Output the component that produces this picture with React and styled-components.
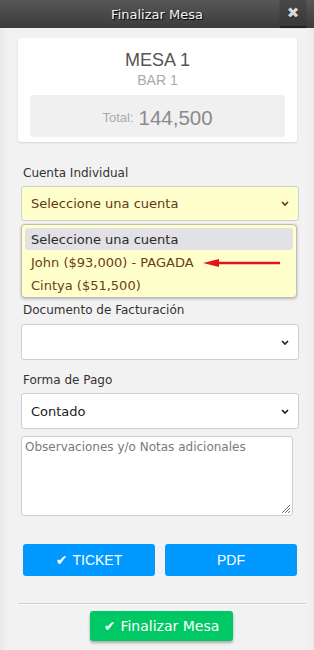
import React from "react";
import styled, { createGlobalStyle } from "styled-components";

const Global = createGlobalStyle`
  html, body { margin: 0; padding: 0; }
  body { width: 314px; height: 650px; overflow: hidden; background: #f1f1f1; font-family: "DejaVu Sans", Verdana, sans-serif; }
  * { box-sizing: border-box; }
`;

const Modal = styled.div`
  width: 314px;
  height: 650px;
  display: flex;
  flex-direction: column;
  background: linear-gradient(to right, #e9e9e9 0px, #f2f2f2 8px, #f2f2f2 306px, #ececec 314px);
`;

const Header = styled.div`
  height: 28px;
  flex: none;
  display: flex;
  align-items: center;
  justify-content: center;
  position: relative;
  background: linear-gradient(#575757, #3b3b3b);
  color: #f4f4f4;
  font-size: 13px;
  text-shadow: 1px 1px 1px #000;
`;

const Close = styled.div`
  position: absolute;
  right: 8px;
  top: 0;
  width: 26px;
  height: 27px;
  background: linear-gradient(#484848, #393939);
  border-bottom: 1px solid #222;
  box-shadow: 0 1px 1px rgba(0,0,0,0.4);
  display: flex;
  align-items: center;
  justify-content: center;
  color: #d8d8d8;
  font-size: 15px;
  text-shadow: 0 1px 0 #222;
`;

const Body = styled.div`
  display: flex;
  flex-direction: column;
  padding: 10px 16px 0 18px;
`;

const Card = styled.div`
  background: #fff;
  border-radius: 3px;
  box-shadow: 0 1px 2px rgba(0,0,0,0.12);
  width: 279px;
  padding: 12px 12px 5px;
  display: flex;
  flex-direction: column;
  align-items: center;
  font-family: "Liberation Sans", Arial, sans-serif;
`;

const Mesa = styled.div`
  font-size: 18px;
  line-height: 21px;
  color: #555;
`;

const Bar = styled.div`
  font-size: 14px;
  line-height: 16px;
  color: #aaa;
  margin-top: 1px;
  margin-bottom: 7px;
`;

const TotalBox = styled.div`
  width: 100%;
  height: 42px;
  background: #f0f0f0;
  border-radius: 3px;
  display: flex;
  align-items: center;
  justify-content: center;
  gap: 5px;
  color: #aaa;
  font-size: 13px;
  padding-top: 3px;
`;

const Amount = styled.span`
  font-size: 20.5px;
  color: #8a8a8a;
`;

const Form = styled.div`
  display: flex;
  flex-direction: column;
  padding-left: 3px;
  margin-right: -1px;
`;

const Label = styled.div`
  font-size: 12px;
  line-height: 15px;
  color: #333;
  margin-top: ${p => p.$top}px;
  margin-bottom: ${p => p.$bottom || 5}px;
  padding-left: 2px;
`;

const Select = styled.div`
  height: ${p => p.$h || 36}px;
  border: 1px solid #cfcfcf;
  border-radius: 3px;
  background: ${p => (p.$yellow ? "#ffffcc" : "#fff")};
  color: ${p => (p.$yellow ? "#5e3a14" : "#222")};
  font-size: 13px;
  display: flex;
  align-items: center;
  justify-content: space-between;
  padding: 0 9px 0 9px;
`;

const Chevron = ({ color }) => (
  <svg width="8" height="5" viewBox="0 0 8 5">
    <path d="M1 1 L4 4 L7 1" fill="none" stroke={color} strokeWidth="1.7" />
  </svg>
);

const List = styled.div`
  margin-top: 3px;
  width: 276px;
  border: 1px solid #bdbdbd;
  border-radius: 4px;
  background: #ffffcc;
  box-shadow: 0 1px 3px rgba(0,0,0,0.25);
  padding: 3px 3px 0;
  display: flex;
  flex-direction: column;
`;

const Option = styled.div`
  display: flex;
  align-items: center;
  gap: 9px;
  padding-left: 6px;
  font-size: 13px;
  border-radius: 3px;
  color: ${p => (p.$active ? "#2a2a2a" : "#6a3e10")};
  background: ${p => (p.$active ? "#e2e1e6" : "transparent")};
  height: ${p => (p.$active ? 22 : 23)}px;
  margin-bottom: ${p => (p.$active ? 1 : 0)}px;
`;

const Arrow = () => (
  <svg width="77" height="10" viewBox="0 0 77 10">
    <path d="M12 5 L77 5" stroke="#e0161b" strokeWidth="2.4" />
    <path d="M0 5 L16 1 L16 9 Z" fill="#e0161b" />
  </svg>
);

const TextareaWrap = styled.div`
  position: relative;
  margin-top: 7px;
  width: 272px;
  height: 80px;
`;

const Textarea = styled.textarea`
  display: block;
  width: 272px;
  height: 80px;
  border: 1px solid #cfcfcf;
  border-radius: 3px;
  background: #fff;
  font-family: "DejaVu Sans", Verdana, sans-serif;
  font-size: 12px;
  padding: 3px 3px;
  resize: none;
  outline: none;
  &::placeholder { color: #7a7a7a; }
`;

const Grip = styled.svg`
  position: absolute;
  right: 2px;
  bottom: 2px;
`;

const ButtonRow = styled.div`
  display: flex;
  gap: 10px;
  margin-top: 28px;
  padding-left: 2px;
`;

const BlueButton = styled.div`
  width: 132px;
  height: 32px;
  background: #0099ff;
  border-radius: 3px;
  color: #fff;
  font-family: "Liberation Sans", Arial, sans-serif;
  font-size: 14px;
  display: flex;
  align-items: center;
  justify-content: center;
  gap: 5px;
`;

const Check = styled.span`
  font-family: "DejaVu Sans", sans-serif;
  font-size: 14px;
  line-height: 1;
`;

const Rule = styled.div`
  margin: 27px -7px 0 -3px;
  height: 2px;
  border-top: 1px solid #cfcfcf;
  border-bottom: 1px solid #fafafa;
`;

const GreenButton = styled.div`
  align-self: center;
  margin-top: 6px;
  margin-left: 3px;
  width: 143px;
  height: 30px;
  background: #00c864;
  border-radius: 3px;
  box-shadow: 0 2px 3px rgba(0,0,0,0.3);
  color: #fff;
  font-size: 14px;
  display: flex;
  align-items: center;
  justify-content: center;
  gap: 5px;
`;

export default function App() {
  return (
    <>
      <Global />
      <Modal>
        <Header>
          Finalizar Mesa
          <Close>✖</Close>
        </Header>
        <Body>
          <Card>
            <Mesa>MESA 1</Mesa>
            <Bar>BAR 1</Bar>
            <TotalBox>
              Total: <Amount>144,500</Amount>
            </TotalBox>
          </Card>
          <Form>
            <Label $top={24}>Cuenta Individual</Label>
            <Select $yellow $h={35}>
              Seleccione una cuenta
              <Chevron color="#5e3a14" />
            </Select>
            <List>
              <Option $active>Seleccione una cuenta</Option>
              <Option>
                John ($93,000) - PAGADA <Arrow />
              </Option>
              <Option>Cintya ($51,500)</Option>
            </List>
            <Label $top={5} $bottom={6}>Documento de Facturación</Label>
            <Select>
              <span />
              <Chevron color="#222" />
            </Select>
            <Label $top={13}>Forma de Pago</Label>
            <Select>
              Contado
              <Chevron color="#222" />
            </Select>
            <TextareaWrap>
              <Textarea placeholder="Observaciones y/o Notas adicionales" />
              <Grip width="11" height="11" viewBox="0 0 11 11">
                <path d="M10 2 L2 10 M10 5 L5 10 M10 8 L8 10" stroke="#777" strokeWidth="1" />
              </Grip>
            </TextareaWrap>
            <ButtonRow>
              <BlueButton>
                <Check>✔</Check>TICKET
              </BlueButton>
              <BlueButton>PDF</BlueButton>
            </ButtonRow>
            <Rule />
            <GreenButton>
              <Check>✔</Check>Finalizar Mesa
            </GreenButton>
          </Form>
        </Body>
      </Modal>
    </>
  );
}
